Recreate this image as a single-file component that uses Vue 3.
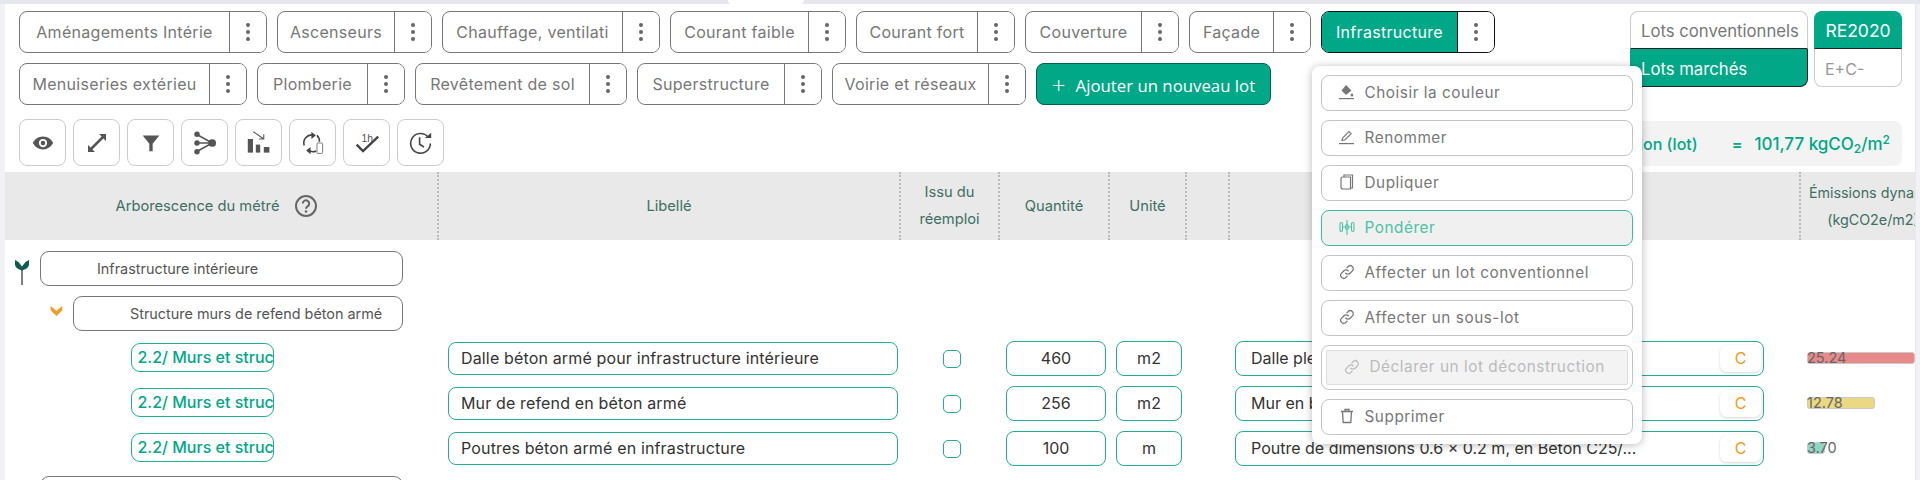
<script setup>
const row1 = [
  { label: 'Aménagements Intérie', w: 248 },
  { label: 'Ascenseurs', w: 155 },
  { label: 'Chauffage, ventilati', w: 218 },
  { label: 'Courant faible', w: 176 },
  { label: 'Courant fort', w: 159 },
  { label: 'Couverture', w: 154 },
  { label: 'Façade', w: 122 },
  { label: 'Infrastructure', w: 174, active: true }
]
const row2 = [
  { label: 'Menuiseries extérieu', w: 228 },
  { label: 'Plomberie', w: 148 },
  { label: 'Revêtement de sol', w: 212 },
  { label: 'Superstructure', w: 185 },
  { label: 'Voirie et réseaux', w: 194 }
]
const lines = [
  { label: 'Dalle béton armé pour infrastructure intérieure', qty: 460, unit: 'm2', desc: 'Dalle pleine en béton armé', value: '25.24', barW: 108, color: '#e88a8a' },
  { label: 'Mur de refend en béton armé', qty: 256, unit: 'm2', desc: 'Mur en béton armé', value: '12.78', barW: 68, color: '#ead882' },
  { label: 'Poutres béton armé en infrastructure', qty: 100, unit: 'm', desc: 'Poutre de dimensions 0.6 × 0.2 m, en Béton C25/...', value: '3.70', barW: 18, color: '#8fd6c4' }
]
const menu = ['Choisir la couleur', 'Renommer', 'Dupliquer', 'Pondérer', 'Affecter un lot conventionnel', 'Affecter un sous-lot']
</script>

<template>
  <div class="page">
    <div class="strip"><span class="notch"></span></div>
    <div class="main">
      <div class="top">
        <div class="lots">
          <div class="lot-row">
            <div v-for="t in row1" :key="t.label" class="lot" :class="{ active: t.active }">
              <span class="lot-name" :style="{ width: t.w - 39 + 'px' }">{{ t.label }}</span>
              <span class="lot-dots"><i></i><i></i><i></i></span>
            </div>
          </div>
          <div class="lot-row">
            <div v-for="t in row2" :key="t.label" class="lot">
              <span class="lot-name" :style="{ width: t.w - 39 + 'px' }">{{ t.label }}</span>
              <span class="lot-dots"><i></i><i></i><i></i></span>
            </div>
            <button class="add"><span class="plus">+</span>Ajouter un nouveau lot</button>
          </div>
        </div>
        <div class="switches">
          <div class="sw-col wide">
            <div class="sw first">Lots conventionnels</div>
            <div class="sw last on">Lots marchés</div>
          </div>
          <div class="sw-col">
            <div class="sw first on center">RE2020</div>
            <div class="sw last center light">E+C-</div>
          </div>
        </div>
      </div>

      <div class="tools">
        <button class="tool">
          <svg width="22" height="22" viewBox="0 0 24 24"><path fill="#555" d="M12 5C7 5 3 8 1 12c2 4 6 7 11 7s9-3 11-7c-2-4-6-7-11-7zm0 11.500a4.500 4.500 0 1 1 0-9 4.500 4.500 0 0 1 0 9zm0-7a2.500 2.500 0 1 0 0 5 2.500 2.500 0 0 0 0-5z"/></svg>
        </button>
        <button class="tool">
          <svg width="24" height="24" viewBox="0 0 24 24"><path fill="#555" d="M14 3h7v7l-2.600-2.600L7.400 18.400 10 21H3v-7l2.600 2.600L16.600 5.600z"/></svg>
        </button>
        <button class="tool">
          <svg width="20" height="20" viewBox="0 0 24 24"><path fill="#555" d="M2 3h20l-8 10v9h-4v-9z"/></svg>
        </button>
        <button class="tool">
          <svg width="24" height="24" viewBox="0 0 30 30"><g stroke="#555" stroke-width="1.800" fill="none"><path d="M6 5l18 10M6 15h18M6 25l18-10"/></g><g fill="#555"><circle cx="5" cy="4" r="3.400"/><circle cx="5" cy="15" r="3.400"/><circle cx="5" cy="26" r="3.400"/><circle cx="24" cy="15" r="4.800"/></g></svg>
        </button>
        <button class="tool">
          <svg width="24" height="24" viewBox="0 0 30 30"><g fill="#555"><rect x="1" y="10" width="6.500" height="17"/><rect x="11" y="17" width="5.500" height="10"/><rect x="21" y="20" width="7" height="7"/></g><path d="M8 1l13 9M21 4v6h-6" stroke="#555" stroke-width="1.300" fill="none"/></svg>
        </button>
        <button class="tool">
          <svg width="24" height="24" viewBox="0 0 30 30"><g stroke="#444" stroke-width="2" fill="none"><path d="M4 18a10 10 0 0 1 11-13"/><path d="M20 5.500a10 10 0 0 1 3 8"/><path d="M19 25a10 10 0 0 1-10-1"/></g><path fill="#444" d="M13 1v9l5.500-4.500zM12 20v9l-5.500-4.500z"/><rect x="20" y="15" width="7" height="13" rx="1" fill="#fff" stroke="#777" stroke-width="1.200"/></svg>
        </button>
        <button class="tool">
          <svg width="26" height="24" viewBox="0 0 32 30"><path d="M3 17l8 8L30 7" stroke="#444" stroke-width="3" fill="none"/><text x="9" y="14" class="oneh">1h</text></svg>
        </button>
        <button class="tool">
          <svg width="25" height="25" viewBox="0 0 28 28"><g stroke="#444" stroke-width="1.800" fill="none"><path d="M22.500 8A11 11 0 1 0 25 15"/><path d="M13 8v8l5 3"/></g><path fill="#444" d="M19 9h7V3z"/></svg>
        </button>
        <div class="metric">
          <span>Construction (lot)</span><span class="eq">=</span>
          <span class="metric-val">101,77 kgCO<sub>2</sub>/m<sup>2</sup></span>
        </div>
      </div>

      <div class="cols head">
        <div class="hc tree-h">Arborescence du métré
          <svg class="help" width="24" height="24" viewBox="0 0 24 24"><circle cx="12" cy="12" r="10" fill="none" stroke="#666" stroke-width="2"/><path d="M8.800 9.500a3.200 3.200 0 1 1 4.800 2.800c-1 .6-1.600 1.200-1.600 2.400" fill="none" stroke="#666" stroke-width="2"/><circle cx="12" cy="17.500" r="1.300" fill="#666"/></svg>
        </div>
        <div class="hc">Libellé</div>
        <div class="hc two">Issu du<br>réemploi</div>
        <div class="hc">Quantité</div>
        <div class="hc">Unité</div>
        <div class="hc"></div>
        <div class="hc"></div>
        <div class="hc two dyn"><span>Émissions dynamiques<br><b class="dyn-unit">(kgCO2e/m2)</b></span></div>
      </div>

      <div class="rows">
        <div class="tree one">
          <svg class="sprout" width="14" height="26" viewBox="0 0 14 26"><path d="M7 8v17" stroke="#000" stroke-width="1"/><path fill="#0d5c4f" d="M0 0l3.500 2L7 6.500 10.500 2 14 0v4.500c0 3-3.500 5-7 6-3.500-1-7-3-7-6z"/></svg>
          <div class="node"><span>Infrastructure intérieure</span></div>
        </div>
        <div class="tree two-l">
          <svg class="chev" width="13" height="10" viewBox="0 0 14 12"><path fill="#f59a23" d="M0 0l3 2.500L7 6l4-3.500L14 0v5l-7 7-7-7z"/></svg>
          <div class="node"><span>Structure murs de refend béton armé</span></div>
        </div>
        <div v-for="l in lines" :key="l.qty" class="cols line">
          <div class="code"><span>2.2/ Murs et structures</span></div>
          <div class="field label">{{ l.label }}</div>
          <div class="check-cell"><span class="check"></span></div>
          <div class="field num">{{ l.qty }}</div>
          <div class="field num unit">{{ l.unit }}</div>
          <div></div>
          <div class="field desc"><span class="desc-text">{{ l.desc }}</span><span class="chip">C</span></div>
          <div class="bar-cell">
            <span class="bar" :style="{ width: l.barW + 'px', background: l.color }"></span>
            <span class="bar-val">{{ l.value }}</span>
          </div>
        </div>
        <div class="tree one"><div class="node"></div></div>
      </div>
    </div>

    <div class="menu">
      <div v-for="(m, i) in menu" :key="m" class="item" :class="{ hover: i === 3 }">
        <svg v-if="i === 0" width="16" height="16" viewBox="0 0 16 16"><path fill="#777" d="M7 1l5.500 5.500L7 11 2.500 6.500zM13 9c.8 1 1.300 1.600 1.300 2.200a1.300 1.300 0 0 1-2.600 0c0-.6.500-1.200 1.300-2.200z"/><rect y="14" width="15" height="1.200" fill="#777"/></svg>
        <svg v-else-if="i === 1" width="16" height="16" viewBox="0 0 16 16"><path d="M3 11.500l.6-2.500L10 2.500l2.200 2.200L5.700 11z" fill="none" stroke="#777" stroke-width="1.100"/><rect y="14" width="15" height="1.200" fill="#777"/></svg>
        <svg v-else-if="i === 2" width="16" height="16" viewBox="0 0 16 16"><path d="M5 3V1h8.500v13h-2M2 4.500C2 3.600 2.600 3 3.500 3h8v12H4c-1.200 0-2-.8-2-2z" fill="none" stroke="#777" stroke-width="1.200"/></svg>
        <svg v-else-if="i === 3" width="16" height="16" viewBox="0 0 16 16"><g fill="none" stroke="#4cc2a5" stroke-width="1.100"><rect x="1" y="3.500" width="2.500" height="9" rx="1.200"/><rect x="6.700" y="5.500" width="2.500" height="5" rx="1.200"/><rect x="12.500" y="3.500" width="2.500" height="9" rx="1.200"/><path d="M8 1v15M3.500 8h3.200M9.200 8h3.300"/></g></svg>
        <svg v-else width="16" height="16" viewBox="0 0 16 16"><g fill="none" stroke="#777" stroke-width="1.300" stroke-linecap="round"><path d="M6.800 9.200a3 3 0 0 0 4.300 0l2.300-2.300a3 3 0 0 0-4.300-4.300L8 3.700"/><path d="M9.200 6.800a3 3 0 0 0-4.300 0L2.600 9.100a3 3 0 0 0 4.300 4.300L8 12.300"/></g></svg>
        <span>{{ m }}</span>
      </div>
      <div class="item outer">
        <div class="inner">
          <svg width="16" height="16" viewBox="0 0 16 16"><g fill="none" stroke="#bbb" stroke-width="1.300" stroke-linecap="round"><path d="M6.800 9.200a3 3 0 0 0 4.300 0l2.300-2.300a3 3 0 0 0-4.300-4.300L8 3.700"/><path d="M9.200 6.800a3 3 0 0 0-4.300 0L2.600 9.100a3 3 0 0 0 4.300 4.300L8 12.300"/></g></svg>
          <span>Déclarer un lot déconstruction</span>
        </div>
      </div>
      <div class="item">
        <svg width="16" height="16" viewBox="0 0 16 16"><path d="M2 3.500h12M6 3.500V1.500h4v2M3.500 3.500l.7 11h7.600l.7-11" fill="none" stroke="#777" stroke-width="1.300"/></svg>
        <span>Supprimer</span>
      </div>
    </div>
  </div>
</template>

<style>
html, body { margin: 0; background: #fff; }
</style>

<style scoped>
* { box-sizing: border-box; }
.page {
  position: relative;
  width: 1920px;
  height: 480px;
  overflow: hidden;
  background: #f1f2f5;
  font-family: Inter, "Liberation Sans", sans-serif;
  color: #777;
}
.strip { height: 4px; background: #e5e7ec; position: relative; }
.notch {
  position: absolute;
  left: 728px;
  width: 76px;
  height: 4px;
  background: #fff;
  border-radius: 0 0 6px 6px;
}
.main {
  margin-left: 5px;
  width: 1911px;
  height: 476px;
  background: #fff;
  border-right: 1px solid #e8e8e8;
}
.top { display: flex; justify-content: space-between; padding: 7px 13px 0 14px; height: 115px; }
.lots { display: flex; flex-direction: column; gap: 10px; }
.lot-row { display: flex; gap: 10px; }
.lot {
  display: flex;
  height: 42px;
  border: 1px solid #777;
  border-radius: 8px;
  overflow: hidden;
  font-size: 16px;
  letter-spacing: 0.3px;
}
.lot-name {
  display: block;
  line-height: 40px;
  text-align: center;
  white-space: nowrap;
  overflow: hidden;
}
.lot-dots {
  width: 37px;
  border-left: 1px solid #777;
  display: flex;
  flex-direction: column;
  align-items: center;
  justify-content: center;
  gap: 3px;
  background: #fff;
}
.lot-dots i { width: 4px; height: 4px; border-radius: 50%; background: #666; }
.lot.active { border-color: #111; }
.lot.active .lot-name { background: #00a887; color: #fff; }
.lot.active .lot-dots { border-left-color: #111; }
.add {
  height: 42px;
  width: 235px;
  border: 1px solid #04614f;
  border-radius: 8px;
  background: #00a887;
  color: #fff;
  font-family: "Open Sans", sans-serif;
  font-size: 16.800px;
  padding: 0;
}
.plus { font-size: 24px; font-weight: 300; margin-right: 10px; vertical-align: -2px; }
.switches { display: flex; gap: 6px; }
.sw-col { width: 88px; }
.sw-col.wide { width: 178px; }
.sw {
  height: 38px;
  line-height: 40px;
  font-size: 16.700px;
  padding-left: 10px;
  border: 1px solid #ccc;
  white-space: nowrap;
}
.sw.first { border-radius: 8px 8px 0 0; border-bottom-color: #222; line-height: 38px; }
.sw.last { border-radius: 0 0 8px 8px; border-top: 0; }
.sw.on { background: #00a887; color: #fff; border-color: #00a887; }
.sw.first.on { border-bottom-color: #222; }
.sw.last.on { border-bottom-color: #222; border-right-color: #222; }
.sw.center { text-align: center; padding: 0; font-size: 17.500px; }
.sw.light { color: #999; text-align: left; padding-left: 10px; font-size: 16px; }
.tools { display: flex; gap: 7px; padding: 0 13px 0 14px; height: 47px; align-items: stretch; }
.tool {
  width: 47px;
  height: 47px;
  border: 1px solid #ccc;
  border-radius: 8px;
  background: #fff;
  padding: 0;
  display: flex;
  align-items: center;
  justify-content: center;
}
.oneh { font: 13px "Liberation Sans", sans-serif; fill: #555; }
.metric {
  margin-left: auto;
  margin-top: 2px;
  width: 420px;
  height: 45px;
  background: #f3f3f3;
  border-radius: 0 8px 8px 0;
  display: flex;
  align-items: center;
  justify-content: flex-end;
  padding-right: 12px;
  color: #00a887;
  font-size: 16px;
  font-weight: 500;
}
.eq { margin: 0 12px 0 34px; font-weight: 600; }
.metric-val { font-size: 17px; font-weight: 500; }
.metric-val sub, .metric-val sup { font-size: 12px; line-height: 0; }
.metric-val sub { vertical-align: -3px; }
.metric-val sup { vertical-align: 6px; }
.cols {
  display: grid;
  grid-template-columns: 434px 462px 99px 110px 77px 43px 571px 114px;
}
.head { margin-top: 6px; height: 68px; background: #e9e9e9; }
.hc {
  display: flex;
  align-items: center;
  justify-content: center;
  text-align: center;
  font-size: 14.700px;
  color: #3f6f62;
  border-right: 2px dotted #bbb;
  overflow: hidden;
  white-space: nowrap;
}
.tree-h { gap: 15px; padding-right: 8px; }
.hc.two { line-height: 27px; }
.hc.dyn { border: 0; justify-content: flex-start; overflow: hidden; font-size: 14.300px; }
.hc.dyn span { display: block; width: 170px; flex-shrink: 0; }
.dyn-unit { font-weight: 400; padding-right: 26px; }
.help { flex-shrink: 0; }
.rows { display: flex; flex-direction: column; gap: 10px; padding-top: 11px; }
.tree { display: flex; align-items: flex-start; height: 35px; width: 398px; flex-shrink: 0; }
.tree.one { padding-left: 35px; position: relative; }
.tree.two-l { padding-left: 68px; position: relative; }
.sprout { position: absolute; left: 10px; top: 9px; }
.chev { position: absolute; left: 45px; top: 10px; }
.node {
  flex: 1;
  height: 35px;
  border: 1px solid #777;
  border-radius: 9px;
  font-size: 14.400px;
  line-height: 33px;
  color: #555;
  padding-left: 56px;
  white-space: nowrap;
}
.line { height: 35px; }
.code {
  margin: 2px 0 0 125.500px;
  width: 143px;
  height: 29px;
  border: 1px solid #20ae95;
  border-radius: 9px;
  padding-left: 6px;
  color: #00a887;
  font-size: 16px;
  font-weight: 500;
  line-height: 27px;
  overflow: hidden;
  white-space: nowrap;
}
.field {
  border: 1px solid #20ae95;
  border-radius: 8px;
  color: #333;
  font-size: 16px;
  line-height: 33px;
  white-space: nowrap;
}
.label { margin: 1px 0 0 9px; width: 450px; height: 33px; line-height: 31px; padding-left: 12px; letter-spacing: 0.15px; }
.check-cell { display: flex; justify-content: center; align-items: center; padding-left: 3px; }
.check { width: 18px; height: 18px; border: 1px solid #20ae95; border-radius: 5px; }
.num { margin-left: 6px; width: 100px; text-align: center; }
.unit { width: 66px; }
.desc {
  margin-left: 5px;
  width: 529px;
  display: flex;
  justify-content: space-between;
  padding: 3px 2px 0 15px;
  line-height: 27px;
}
.desc-text { overflow: hidden; }
.chip {
  width: 41px;
  height: 27px;
  flex-shrink: 0;
  background: #fff;
  border-radius: 7px;
  box-shadow: 0 1px 3px rgba(0, 0, 0, 0.16);
  color: #f59a23;
  text-align: center;
  font-size: 16px;
}
.bar-cell { position: relative; margin-left: 6px; overflow: hidden; }
.bar {
  position: absolute;
  left: 0;
  top: 11px;
  height: 12px;
  border: 1px solid #c9c9c9;
  border-radius: 3px;
}
.bar-val {
  position: absolute;
  left: 0;
  top: 8px;
  font-size: 14.500px;
  line-height: 18px;
  color: #666;
}
.menu {
  position: absolute;
  left: 1312px;
  top: 66px;
  width: 330px;
  height: 378px;
  background: #fff;
  border-radius: 8px;
  box-shadow: 0 1px 8px rgba(0, 0, 0, 0.28);
  padding: 9px;
  display: flex;
  flex-direction: column;
  gap: 9px;
}
.item {
  height: 36px;
  flex-shrink: 0;
  border: 1px solid #c4c4c4;
  border-radius: 8px;
  display: flex;
  align-items: center;
  gap: 9.500px;
  padding: 0 0 2px 17px;
  font-size: 15.300px;
  letter-spacing: 0.55px;
  color: #777;
  white-space: nowrap;
}
.item.hover { background: #f0f0f0; border-color: #3dbb9e; color: #4cc2a5; }
.item.outer { height: 45px; padding: 4px; }
.inner {
  flex: 1;
  height: 100%;
  background: #f3f3f3;
  border: 1px solid #ddd;
  border-radius: 2px;
  display: flex;
  align-items: center;
  gap: 9.500px;
  padding: 0 0 2px 17px;
  color: #bbb;
}
</style>
